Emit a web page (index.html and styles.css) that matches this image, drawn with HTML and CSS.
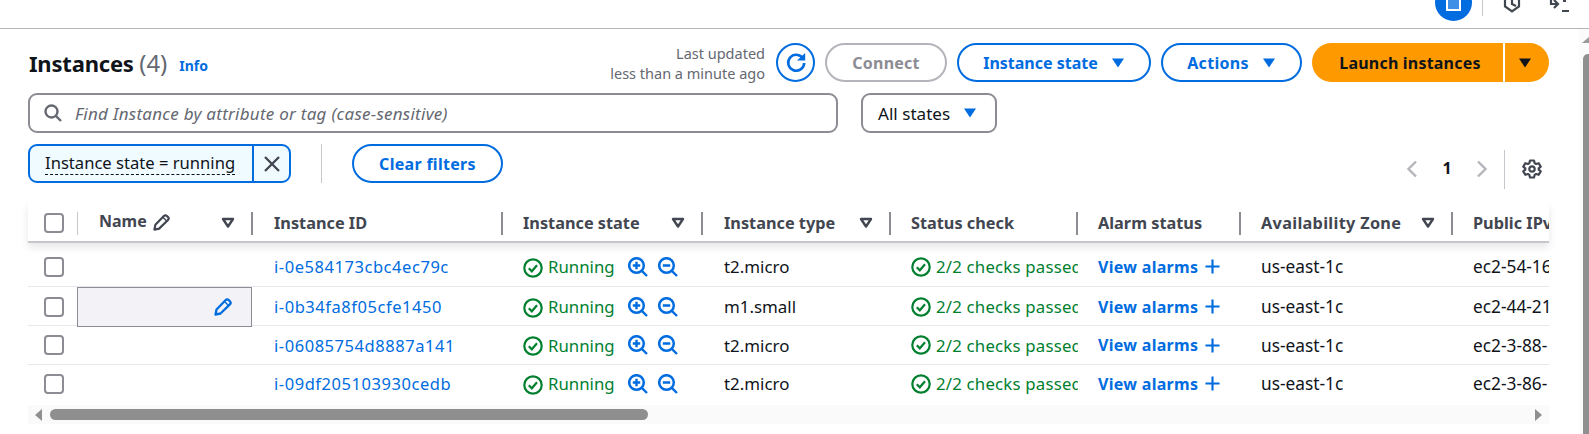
FILE: index.html
```html
<!DOCTYPE html>
<html lang="en">
<head>
<meta charset="utf-8">
<title>Instances</title>
<link rel="stylesheet" href="styles.css">
</head>
<body>
<svg class="sprite" width="0" height="0">
  <defs>
    <symbol id="pencil" viewBox="0 0 18 18"><path d="M1.500 16.500l1-5L11.500 2.200c1-1 2.300-1 3.200-.1l1.200 1.200c.9.900.9 2.200 0 3.100L6.500 15.500z" fill="none" stroke="currentColor" stroke-width="2.300" stroke-linejoin="round"/><path d="M10.500 3.500l4 4" fill="none" stroke="currentColor" stroke-width="1.500"/></symbol>
    <symbol id="sort" viewBox="0 0 14 12"><path d="M2 2h10L7 9.500z" fill="none" stroke="currentColor" stroke-width="2.400" stroke-linejoin="round"/></symbol>
    <symbol id="check" viewBox="0 0 20 20"><circle cx="10" cy="10" r="8.700" fill="none" stroke="currentColor" stroke-width="2.200"/><path d="M5.800 10.300l3 3 5.200-6" fill="none" stroke="currentColor" stroke-width="2.200"/></symbol>
    <symbol id="zoomin" viewBox="0 0 20 20"><circle cx="8.500" cy="8.500" r="7.300" fill="none" stroke="currentColor" stroke-width="2.500"/><path d="M13.800 13.800l5.200 5.200M4.800 8.500h7.400M8.500 4.800v7.400" fill="none" stroke="currentColor" stroke-width="2.400"/></symbol>
    <symbol id="zoomout" viewBox="0 0 20 20"><circle cx="8.500" cy="8.500" r="7.300" fill="none" stroke="currentColor" stroke-width="2.500"/><path d="M13.800 13.800l5.200 5.200M4.800 8.500h7.400" fill="none" stroke="currentColor" stroke-width="2.400"/></symbol>
    <symbol id="plus" viewBox="0 0 16 16"><path d="M.5 8h15M8 .5v15" fill="none" stroke="currentColor" stroke-width="2.300"/></symbol>
    <symbol id="caret" viewBox="0 0 14 10"><path d="M1 0.500h12L7 9.500z" fill="currentColor"/></symbol>
  </defs>
</svg>

<header class="topbar">
  <div class="top-icons">
    <span class="top-circle"><span class="top-square"></span></span>
    <span class="top-divider"></span>
    <svg class="top-icon" width="18" height="13" viewBox="0 0 18 13"><path d="M9 -6l7 4v8.500l-7 5-7-5V-2z" fill="none" stroke="currentColor" stroke-width="2.200"/><path d="M9 0v4l4 2" fill="none" stroke="currentColor" stroke-width="2.200"/></svg>
    <svg class="top-icon top-icon-last" width="20" height="13" viewBox="0 0 20 13"><path d="M2 -3v7h7M5 0l4 4-4 4M13 11h7M14 1h3" fill="none" stroke="currentColor" stroke-width="2.200"/></svg>
  </div>
</header>

<div class="shell">
  <main class="content">
    <section class="head-row">
      <h1 class="title">Instances <span class="count">(4)</span></h1>
      <a class="info">Info</a>
      <div class="updated"><span>Last updated</span><span>less than a minute ago</span></div>
      <button class="round-btn" aria-label="Refresh">
        <svg width="22" height="22" viewBox="0 0 22 22"><path d="M18 6.500A8 8 0 1 0 19.200 11" fill="none" stroke="currentColor" stroke-width="2.600"/><path d="M12 8.500h8.200V1z" fill="currentColor"/></svg>
      </button>
      <button class="btn btn-disabled btn-connect">Connect</button>
      <button class="btn btn-state">Instance state <svg class="caret" width="14" height="10"><use href="#caret"/></svg></button>
      <button class="btn btn-actions">Actions <svg class="caret" width="14" height="10"><use href="#caret"/></svg></button>
      <div class="launch">
        <button class="launch-main">Launch instances</button>
        <button class="launch-drop" aria-label="More"><svg width="14" height="10"><use href="#caret"/></svg></button>
      </div>
    </section>

    <section class="search-row">
      <div class="search">
        <svg width="18" height="18" viewBox="0 0 18 18"><circle cx="7.500" cy="7.500" r="6" fill="none" stroke="currentColor" stroke-width="2.400"/><path d="M12 12l5 5" stroke="currentColor" stroke-width="2.400"/></svg>
        <span class="placeholder">Find Instance by attribute or tag (case-sensitive)</span>
      </div>
      <div class="select">All states <svg width="14" height="10"><use href="#caret"/></svg></div>
    </section>

    <section class="filter-row">
      <div class="token">
        <span class="token-text"><span class="token-label">Instance state = running</span></span>
        <button class="token-x" aria-label="Remove"><svg width="16" height="16" viewBox="0 0 16 16"><path d="M1 1l14 14M15 1L1 15" fill="none" stroke="currentColor" stroke-width="2.300"/></svg></button>
      </div>
      <span class="vline"></span>
      <button class="btn btn-clear">Clear filters</button>
      <div class="pager">
        <svg width="12" height="18" viewBox="0 0 12 18"><path d="M10 1.500L2.500 9l7.500 7.500" fill="none" stroke="currentColor" stroke-width="2.400"/></svg>
        <span class="page-num">1</span>
        <svg width="12" height="18" viewBox="0 0 12 18"><path d="M2 1.500L9.500 9 2 16.500" fill="none" stroke="currentColor" stroke-width="2.400"/></svg>
      </div>
      <span class="vline vline-pager"></span>
      <svg class="gear" width="20" height="20" viewBox="0 0 20 20"><path d="M8 1.500h4l.6 2.600 1.500.9 2.600-.8 2 3.400-2 1.800v1.200l2 1.800-2 3.400-2.600-.8-1.500.9-.6 2.600H8l-.6-2.600-1.500-.9-2.600.8-2-3.400 2-1.800V9.400l-2-1.800 2-3.400 2.600.8 1.500-.9z" fill="none" stroke="currentColor" stroke-width="2.200" stroke-linejoin="round"/><circle cx="10" cy="10" r="2.700" fill="none" stroke="currentColor" stroke-width="2.200"/></svg>
    </section>

    <section class="table">
      <div class="row row-head">
        <div class="cell cell-check"><span class="box"></span></div>
        <div class="cell cell-name"><span class="name-label"><span class="name-text">Name</span><svg width="17" height="17"><use href="#pencil"/></svg></span><svg class="sort" width="14" height="12"><use href="#sort"/></svg></div>
        <div class="cell cell-id"><span>Instance ID</span></div>
        <div class="cell cell-state"><span>Instance state</span><svg class="sort" width="14" height="12"><use href="#sort"/></svg></div>
        <div class="cell cell-type"><span>Instance type</span><svg class="sort" width="14" height="12"><use href="#sort"/></svg></div>
        <div class="cell cell-status"><span>Status check</span></div>
        <div class="cell cell-alarm"><span>Alarm status</span></div>
        <div class="cell cell-az"><span class="head-wide">Availability Zone</span><svg class="sort" width="14" height="12"><use href="#sort"/></svg></div>
        <div class="cell cell-dns"><span>Public IPv4 DNS</span></div>
      </div>

      <div class="row row-1">
        <div class="cell cell-check"><span class="box"></span></div>
        <div class="cell cell-name"></div>
        <div class="cell cell-id"><a class="link">i-0e584173cbc4ec79c</a></div>
        <div class="cell cell-state"><svg class="ok" width="20" height="20"><use href="#check"/></svg><span class="ok-text">Running</span><svg class="zoom zi" width="20" height="20"><use href="#zoomin"/></svg><svg class="zoom" width="20" height="20"><use href="#zoomout"/></svg></div>
        <div class="cell cell-type">t2.micro</div>
        <div class="cell cell-status"><svg class="ok" width="20" height="20"><use href="#check"/></svg><span class="ok-text">2/2 checks passed</span></div>
        <div class="cell cell-alarm"><a class="alarm-link">View alarms</a><svg width="15" height="15"><use href="#plus"/></svg></div>
        <div class="cell cell-az">us-east-1c</div>
        <div class="cell cell-dns">ec2-54-16</div>
      </div>

      <div class="row row-2">
        <div class="cell cell-check"><span class="box"></span></div>
        <div class="cell cell-name cell-edit"><svg width="18" height="18"><use href="#pencil"/></svg></div>
        <div class="cell cell-id"><a class="link">i-0b34fa8f05cfe1450</a></div>
        <div class="cell cell-state"><svg class="ok" width="20" height="20"><use href="#check"/></svg><span class="ok-text">Running</span><svg class="zoom zi" width="20" height="20"><use href="#zoomin"/></svg><svg class="zoom" width="20" height="20"><use href="#zoomout"/></svg></div>
        <div class="cell cell-type">m1.small</div>
        <div class="cell cell-status"><svg class="ok" width="20" height="20"><use href="#check"/></svg><span class="ok-text">2/2 checks passed</span></div>
        <div class="cell cell-alarm"><a class="alarm-link">View alarms</a><svg width="15" height="15"><use href="#plus"/></svg></div>
        <div class="cell cell-az">us-east-1c</div>
        <div class="cell cell-dns">ec2-44-21</div>
      </div>

      <div class="row row-3">
        <div class="cell cell-check"><span class="box"></span></div>
        <div class="cell cell-name"></div>
        <div class="cell cell-id"><a class="link">i-06085754d8887a141</a></div>
        <div class="cell cell-state"><svg class="ok" width="20" height="20"><use href="#check"/></svg><span class="ok-text">Running</span><svg class="zoom zi" width="20" height="20"><use href="#zoomin"/></svg><svg class="zoom" width="20" height="20"><use href="#zoomout"/></svg></div>
        <div class="cell cell-type">t2.micro</div>
        <div class="cell cell-status"><svg class="ok" width="20" height="20"><use href="#check"/></svg><span class="ok-text">2/2 checks passed</span></div>
        <div class="cell cell-alarm"><a class="alarm-link">View alarms</a><svg width="15" height="15"><use href="#plus"/></svg></div>
        <div class="cell cell-az">us-east-1c</div>
        <div class="cell cell-dns">ec2-3-88-</div>
      </div>

      <div class="row row-4">
        <div class="cell cell-check"><span class="box"></span></div>
        <div class="cell cell-name"></div>
        <div class="cell cell-id"><a class="link">i-09df205103930cedb</a></div>
        <div class="cell cell-state"><svg class="ok" width="20" height="20"><use href="#check"/></svg><span class="ok-text">Running</span><svg class="zoom zi" width="20" height="20"><use href="#zoomin"/></svg><svg class="zoom" width="20" height="20"><use href="#zoomout"/></svg></div>
        <div class="cell cell-type">t2.micro</div>
        <div class="cell cell-status"><svg class="ok" width="20" height="20"><use href="#check"/></svg><span class="ok-text">2/2 checks passed</span></div>
        <div class="cell cell-alarm"><a class="alarm-link">View alarms</a><svg width="15" height="15"><use href="#plus"/></svg></div>
        <div class="cell cell-az">us-east-1c</div>
        <div class="cell cell-dns">ec2-3-86-</div>
      </div>

      <div class="hscroll">
        <svg width="7" height="12" viewBox="0 0 7 12"><path d="M7 0v12L0 6z" fill="#8f8f8f"/></svg>
        <div class="hscroll-track"><div class="hscroll-thumb"></div></div>
        <svg width="7" height="12" viewBox="0 0 7 12"><path d="M0 0v12l7-6z" fill="#8f8f8f"/></svg>
      </div>
    </section>
  </main>
  <aside class="vscroll">
    <svg width="7" height="6" viewBox="0 0 7 6"><path d="M0 6h7L7 0z" fill="#9a9a9a"/></svg>
    <div class="vscroll-thumb"></div>
  </aside>
</div>
</body>
</html>
```
FILE: styles.css
```css
* { box-sizing: border-box; }
html, body { margin: 0; height: 100%; overflow: hidden; background: #fff; }
body { font-family: "Noto Sans", "Open Sans", sans-serif; font-size: 16px; color: #0f141a; }
.sprite { display: block; position: absolute; }
button { font: inherit; background: none; cursor: pointer; padding: 0; }
svg { display: block; flex: none; }

.topbar { height: 29px; border-bottom: 1px solid #b4b4bb; overflow: hidden; display: flex; justify-content: flex-end; }
.top-icons { display: flex; align-items: flex-start; height: 28px; padding-right: 20px; color: #414750; }
.top-circle { width: 37px; height: 37px; margin-top: -16px; border-radius: 50%; background: #006ce0; display: flex; align-items: center; justify-content: center; }
.top-square { width: 15px; height: 15px; border: 2px solid #fff; background: #3f8fe6; margin-top: 2px; outline: 2px solid #006ce0; }
.top-divider { width: 1px; height: 16px; background: #c6c6cd; margin: 0 20px 0 10px; }
.top-icon-last { margin-left: 28px; }

.shell { display: flex; height: 405px; }
.content { flex: 1; min-width: 0; padding: 14px 0 0 28px; }
.vscroll { width: 10px; flex: none; display: flex; flex-direction: column; align-items: flex-end; padding-top: 8px; background: #fbfbfb; }
.vscroll-thumb { width: 6px; flex: 1; margin-top: 11px; background: #8f8f8f; border-radius: 5px 0 0 0; }

.head-row { display: flex; align-items: center; height: 39px; width: 1521px; }
.title { margin: 0 0 0 1px; font-size: 22px; font-weight: 700; line-height: 30px; letter-spacing: -0.2px; }
.count { font-weight: 400; font-size: 24px; color: #656871; letter-spacing: 0; }
.info { margin-left: 12px; margin-top: 5px; font-size: 14px; font-weight: 700; color: #006ce0; }
.updated { margin-left: auto; display: flex; flex-direction: column; align-items: flex-end; font-size: 14.500px; line-height: 20px; color: #656871; }
.round-btn { width: 39px; height: 39px; margin-left: 11px; border: 2px solid #006ce0; border-radius: 50%; color: #006ce0; display: flex; align-items: center; justify-content: center; }
.btn { height: 39px; border: 2px solid #006ce0; border-radius: 20px; font-weight: 700; color: #006ce0; display: flex; align-items: center; justify-content: center; gap: 13px; }
.btn-disabled { border-color: #b4b4bb; color: #8c8c94; }
.btn-connect { width: 122px; margin-left: 10px; letter-spacing: .25px; }
.btn-state { width: 194px; margin-left: 10px; }
.btn-actions { width: 141px; margin-left: 10px; letter-spacing: .3px; }
.launch { display: flex; margin-left: 10px; height: 39px; }
.launch-main { width: 191px; border: 0; border-radius: 20px 0 0 20px; background: #ff9900; font-weight: 700; color: #0f141a; padding-left: 5px; letter-spacing: .2px; }
.launch-drop { width: 44px; margin-left: 2px; border: 0; border-radius: 0 20px 20px 0; background: #ff9900; color: #0f141a; display: flex; align-items: center; justify-content: center; padding-right: 4px; }

.search-row { display: flex; gap: 23px; margin-top: 11px; height: 40px; }
.search { width: 810px; border: 2px solid #8c8c94; border-radius: 9px; display: flex; align-items: center; padding-left: 14px; gap: 13px; color: #656871; }
.placeholder { font-style: italic; font-size: 17px; letter-spacing: .26px; }
.select { width: 136px; border: 2px solid #8c8c94; border-radius: 9px; display: flex; align-items: center; padding-left: 15px; gap: 13px; font-size: 17.100px; }
.select svg { color: #006ce0; }

.filter-row { display: flex; align-items: center; margin-top: 11px; height: 39px; width: 1521px; }
.token { display: flex; width: 263px; height: 39px; border: 2px solid #006ce0; border-radius: 9px; background: #f0fbff; overflow: hidden; }
.token-text { flex: 1; padding-left: 15px; display: flex; align-items: center; font-size: 16.600px; }
.token-label { line-height: 22px; border-bottom: 1px dashed #0f141a; }
.token-x { width: 37px; border: 0; border-left: 2px solid #006ce0; color: #424650; display: flex; align-items: center; justify-content: center; }
.vline { width: 1px; height: 39px; background: #c6c6cd; margin-left: 30px; }
.btn-clear { width: 151px; margin-left: 30px; letter-spacing: .3px; }
.pager { display: flex; align-items: center; margin-left: auto; margin-top: 11px; color: #b4b4bb; }
.page-num { width: 58px; text-align: center; font-size: 16px; font-weight: 700; color: #0f141a; margin-top: -2px; }
.vline-pager { margin: 11px 17px 0 16px; }
.gear { color: #424650; margin: 11px 7px 0 0; }

.table { width: 1521px; margin-top: 20px; }
.row { display: grid; grid-template-columns: 50px 175px 250px 200px 188px 187px 163px 212px 96px; align-items: center; border-bottom: 1px solid #e8e8ec; }
.row-1 { height: 44px; padding-top: 4px; }
.row-2 { height: 39px; }
.row-3 { height: 39px; }
.row-4 { height: 40px; border-bottom: 0; padding-bottom: 3px; }
.row-head { height: 40px; padding-top: 1px; border-bottom: 2px solid #c6c6cd; box-shadow: 0 4px 8px rgba(0, 7, 22, .1); clip-path: inset(0 -12px -14px -12px); font-weight: 700; color: #424650; position: relative; }
.cell { height: 100%; display: flex; align-items: center; white-space: nowrap; overflow: hidden; }
.cell-check { padding-left: 16px; }
.cell-name { padding-left: 21px; }
.cell-id { padding-left: 21px; }
.cell-state { padding-left: 20px; }
.cell-type { padding-left: 21px; font-size: 16.900px; }
.cell-status { padding-left: 20px; }
.cell-alarm { padding-left: 20px; gap: 7px; color: #006ce0; }
.cell-az { padding-left: 20px; font-size: 17.300px; }
.cell-dns { padding-left: 20px; font-size: 17.300px; }

.row-head .cell { justify-content: space-between; padding-right: 18px; position: relative; font-size: 16.300px; color: #424650; }
.row-head .cell::after { content: ""; position: absolute; right: 0; top: 8px; width: 2px; height: 23px; background: #8c8c94; }
.row-head .cell-check { padding-right: 0; }
.row-head .cell-check::after { width: 1px; background: #c6c6cd; }
.row-head .cell-dns { padding-right: 0; }
.row-head .cell-dns::after { display: none; }
.head-wide { letter-spacing: .3px; }
.sort { color: #424650; }
.name-label { display: flex; align-items: center; gap: 6px; }
.name-text { margin-top: -4px; font-size: 16px; }

.box { display: block; width: 20px; height: 20px; border: 2px solid #8c8c94; border-radius: 4px; background: #fff; }
.link { color: #006ce0; font-size: 16.500px; letter-spacing: .55px; }
.ok { color: #00802f; margin-right: 5px; }
.ok-text { color: #00802f; font-size: 16.800px; }
.row .cell-state .ok { margin-top: 2px; }
.cell-status .ok-text { font-size: 16.800px; letter-spacing: .2px; }
.zoom { color: #006ce0; }
.zi { margin: 0 10px 0 13px; }
.alarm-link { font-weight: 700; letter-spacing: .3px; }
.row .cell-edit { align-self: start; height: 40px; margin: 0 0 -1px -1px; width: 175px; background: #f3f3f7; border: 1px solid #8c8c94; padding: 0 19px 0 0; justify-content: flex-end; color: #006ce0; }

.hscroll { display: flex; align-items: center; height: 19px; background: #fafafa; padding: 0 7px; }
.hscroll-track { flex: 1; padding: 0 8px; }
.hscroll-thumb { width: 598px; height: 11px; border-radius: 6px; background: #8f8f8f; }
```
